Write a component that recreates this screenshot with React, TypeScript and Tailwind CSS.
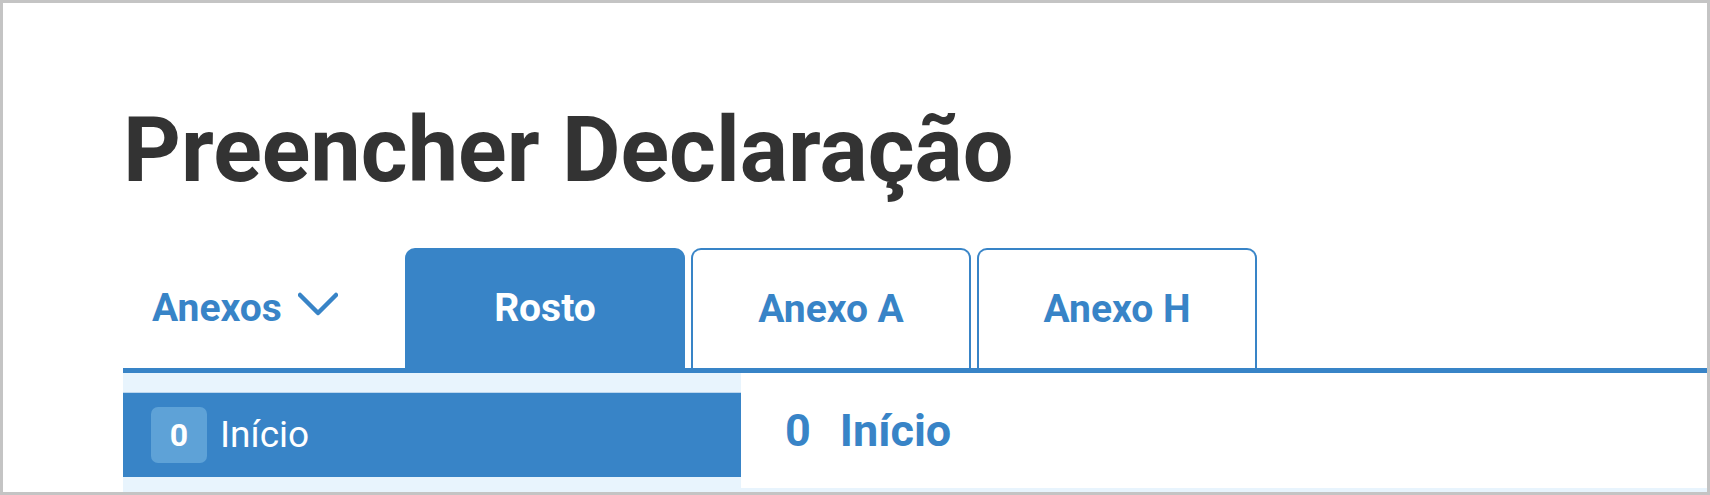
import React from 'react';

/**
 * Declaration form header: title, annex tabs and the section sidebar.
 */

const tabs = ['Rosto', 'Anexo A', 'Anexo H'];

function Chevron() {
  return (
    <svg width="40" height="24" viewBox="0 0 40 24" className="mb-[9px] shrink-0">
      <polyline
        points="2,3 20,21 38,3"
        fill="none"
        stroke="#3884c7"
        strokeWidth="4.5"
        strokeLinecap="round"
        strokeLinejoin="round"
      />
    </svg>
  );
}

export default function App() {
  return (
    <div
      className="h-[495px] w-[1710px] overflow-hidden border-[3px] border-[#c4c4c4] bg-white"
      style={{ fontFamily: 'Roboto, "Liberation Sans", sans-serif' }}
    >
      <div className="pl-[120px] pt-[103px]">
        {/* Title */}
        <h1 className="text-[90px] leading-[90px] font-bold text-[#333333] whitespace-nowrap">
          Preencher Declaração
        </h1>

        {/* Tabs row */}
        <div className="mt-[52px] flex h-[120px] items-end">
          <div className="flex h-full w-[282px] items-center gap-[16px] pl-[29px]">
            <span className="text-[39px] font-bold text-[#3884c7]">Anexos</span>
            <Chevron />
          </div>
          <div className="flex h-full gap-[6px]">
            {tabs.map((tab, i) =>
              i === 0 ? (
                <div
                  key={tab}
                  className="flex h-full w-[280px] items-center justify-center rounded-t-[10px] bg-[#3884c7] text-[39px] font-bold text-white"
                >
                  {tab}
                </div>
              ) : (
                <div
                  key={tab}
                  className="flex h-full w-[280px] items-center justify-center rounded-t-[10px] border-2 border-b-0 border-[#3884c7] bg-white text-[39px] font-bold text-[#3884c7]"
                >
                  {tab}
                </div>
              )
            )}
          </div>
        </div>
        <div className="h-[5px] bg-[#3884c7]" />

        {/* Sidebar + content */}
        <div className="flex h-[200px] bg-[#e8f4fd]">
          <div className="w-[618px] pt-[19px]">
            <div className="flex h-[85px] items-center gap-[13px] border-t border-[#bcd7ef] bg-[#3884c7] pl-[28px]">
              <span className="flex h-[56px] w-[56px] items-center justify-center rounded-[7px] bg-[#5ea2d7] text-[32px] font-bold text-white">
                0
              </span>
              <span className="text-[37px] text-white">Início</span>
            </div>
          </div>
          <div className="flex-1">
            <div className="flex h-[115px] items-center gap-[29px] bg-white pl-[44px] text-[45px] font-bold text-[#3884c7]">
              <span>0</span>
              <span>Início</span>
            </div>
          </div>
        </div>
      </div>
    </div>
  );
}
